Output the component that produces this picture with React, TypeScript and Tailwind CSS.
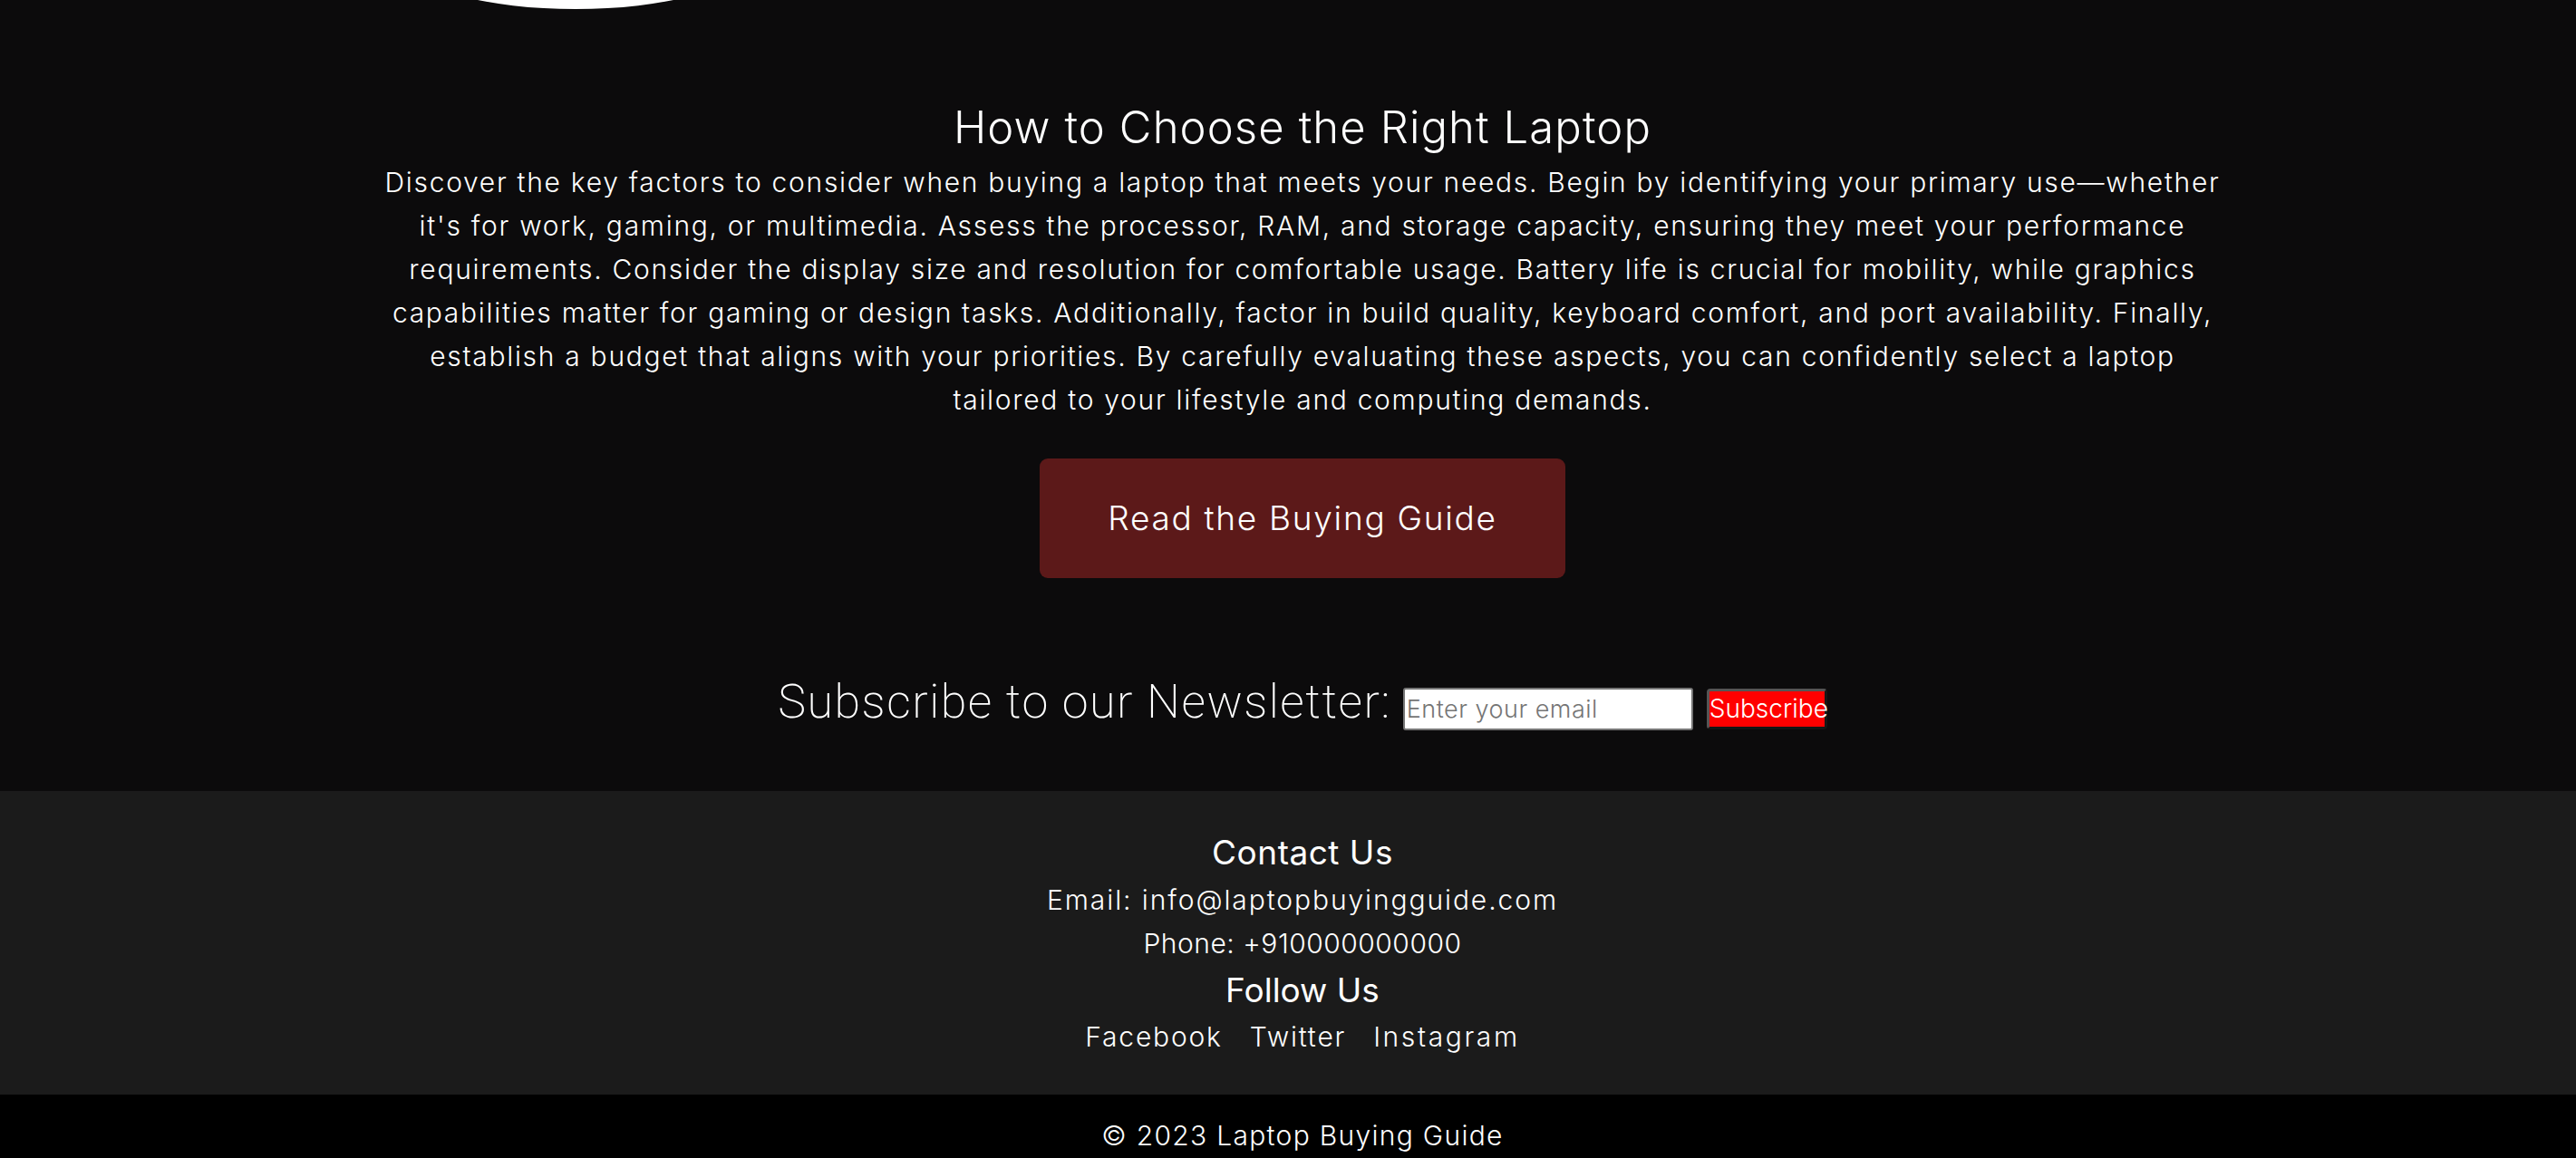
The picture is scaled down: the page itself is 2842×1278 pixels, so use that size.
export default function App() {
  const lines = [
    "Discover the key factors to consider when buying a laptop that meets your needs. Begin by identifying your primary use\u2014whether",
    "it's for work, gaming, or multimedia. Assess the processor, RAM, and storage capacity, ensuring they meet your performance",
    "requirements. Consider the display size and resolution for comfortable usage. Battery life is crucial for mobility, while graphics",
    "capabilities matter for gaming or design tasks. Additionally, factor in build quality, keyboard comfort, and port availability. Finally,",
    "establish a budget that aligns with your priorities. By carefully evaluating these aspects, you can confidently select a laptop",
    "tailored to your lifestyle and computing demands.",
  ];
  return (
    <div className="min-h-screen w-full overflow-hidden bg-[#0c0b0c] font-['Inter',_sans-serif] text-white">
      <section className="pl-[32px] pb-[67px]">
        <div className="-mt-[90px] ml-[423px] h-[100px] w-[360px] rounded-[50%] bg-white" />
        <h2 className="mt-[101px] text-center text-[49px] font-light leading-[60px] tracking-[1.1px]">
          How to Choose the Right Laptop
        </h2>
        <p className="mt-[6px] text-center text-[30px] font-light leading-[48px] tracking-[1.7px]">
          {lines.map((l, i) => (
            <span key={i}>
              {l}
              {i < lines.length - 1 && <br />}
            </span>
          ))}
        </p>
        <div className="mt-[41px] flex justify-center">
          <a className="flex h-[132px] w-[580px] items-center justify-center rounded-[9px] bg-[#5c1919] text-[37px] font-light tracking-[1.7px]">
            Read the Buying Guide
          </a>
        </div>
        <div className="mt-[107px] flex items-baseline justify-center">
          <h2 className="font-['Roboto',_sans-serif] text-[52px] font-extralight leading-[60px] tracking-[1.5px]">
            Subscribe to our Newsletter:
          </h2>
          <input
            type="email"
            placeholder="Enter your email"
            className="ml-[13px] h-[47px] w-[320px] rounded-[3px] border-2 border-[#767676] bg-white px-[2px] text-[27px] font-light tracking-[0.5px] text-black placeholder:text-[#757575]"
          />
          <button className="ml-[15px] h-[45px] w-[133px] rounded-[4px] border-[3px] border-t-[#555] border-l-[#555] border-b-[#161616] border-r-[#161616] bg-[#ff0000] p-0 text-[28px] font-light leading-[38px] text-white">
            Subscribe
          </button>
        </div>
      </section>
      <footer className="bg-[#1b1b1b] pl-[32px] pt-[46px] pb-[40px] text-center">
        <h3 className="text-[37px] font-normal leading-[44px] tracking-[0.5px]">Contact Us</h3>
        <p className="mt-[6px] text-[30px] font-light leading-[48px] tracking-[1.9px]">
          Email: info@laptopbuyingguide.com
        </p>
        <p className="text-[30px] font-light leading-[48px] tracking-[0.5px]">Phone: +910000000000</p>
        <h3 className="mt-[6px] text-[37px] font-normal leading-[44px]">Follow Us</h3>
        <div className="mt-[5px] flex justify-center gap-[30px] text-[30px] font-light leading-[48px] tracking-[1.8px]">
          <a>Facebook</a>
          <a>Twitter</a>
          <a className="tracking-[2.6px]">Instagram</a>
        </div>
      </footer>
      <div className="bg-black pl-[32px] pt-[21px] pb-[21px] text-center text-[30px] font-light leading-[48px] tracking-[1.3px]">
        © 2023 Laptop Buying Guide
      </div>
    </div>
  );
}
